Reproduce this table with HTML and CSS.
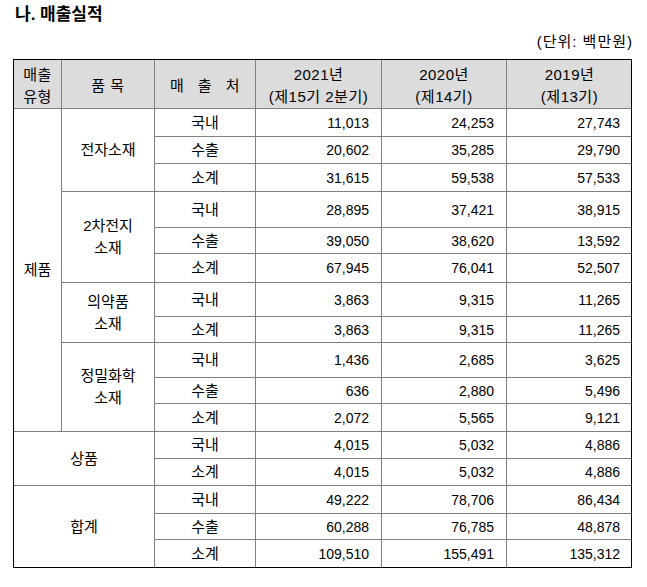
FILE: index.html
```html
<!DOCTYPE html>
<html lang="ko">
<head>
<meta charset="utf-8">
<title>매출실적</title>
<link rel="stylesheet" href="styles.css">
</head>
<body>
<div class="top">
  <div class="title">나. 매출실적</div>
  <div class="unit">(단위: 백만원)</div>
</div>
<div class="frame">
<table class="sales">
  <colgroup>
    <col class="c1"><col class="c2"><col class="c3"><col class="c4"><col class="c5"><col class="c6">
  </colgroup>
  <thead>
    <tr class="h49">
      <th>매출<br>유형</th>
      <th>품 목</th>
      <th class="spaced">매 출 처</th>
      <th>2021년<br>(제15기 2분기)</th>
      <th>2020년<br>(제14기)</th>
      <th>2019년<br>(제13기)</th>
    </tr>
  </thead>
  <tbody>
    <tr class="h28"><td rowspan="11">제품</td><td rowspan="3">전자소재</td><td>국내</td><td class="num">11,013</td><td class="num">24,253</td><td class="num">27,743</td></tr>
    <tr class="h27"><td>수출</td><td class="num">20,602</td><td class="num">35,285</td><td class="num">29,790</td></tr>
    <tr class="h28"><td>소계</td><td class="num">31,615</td><td class="num">59,538</td><td class="num">57,533</td></tr>
    <tr class="h36"><td rowspan="3">2차전지<br>소재</td><td>국내</td><td class="num">28,895</td><td class="num">37,421</td><td class="num">38,915</td></tr>
    <tr class="h26"><td>수출</td><td class="num">39,050</td><td class="num">38,620</td><td class="num">13,592</td></tr>
    <tr class="h29"><td>소계</td><td class="num">67,945</td><td class="num">76,041</td><td class="num">52,507</td></tr>
    <tr class="h34"><td rowspan="2">의약품<br>소재</td><td>국내</td><td class="num">3,863</td><td class="num">9,315</td><td class="num">11,265</td></tr>
    <tr class="h26"><td>소계</td><td class="num">3,863</td><td class="num">9,315</td><td class="num">11,265</td></tr>
    <tr class="h35"><td rowspan="3">정밀화학<br>소재</td><td>국내</td><td class="num">1,436</td><td class="num">2,685</td><td class="num">3,625</td></tr>
    <tr class="h26"><td>수출</td><td class="num">636</td><td class="num">2,880</td><td class="num">5,496</td></tr>
    <tr class="h28"><td>소계</td><td class="num">2,072</td><td class="num">5,565</td><td class="num">9,121</td></tr>
    <tr class="h27"><td colspan="2" rowspan="2">상품</td><td>국내</td><td class="num">4,015</td><td class="num">5,032</td><td class="num">4,886</td></tr>
    <tr class="h27"><td>소계</td><td class="num">4,015</td><td class="num">5,032</td><td class="num">4,886</td></tr>
    <tr class="h28"><td colspan="2" rowspan="3">합계</td><td>국내</td><td class="num">49,222</td><td class="num">78,706</td><td class="num">86,434</td></tr>
    <tr class="h26"><td>수출</td><td class="num">60,288</td><td class="num">76,785</td><td class="num">48,878</td></tr>
    <tr class="h28"><td>소계</td><td class="num">109,510</td><td class="num">155,491</td><td class="num">135,312</td></tr>
  </tbody>
</table>
</div>
</body>
</html>
```
FILE: styles.css
```css
html, body {
  margin: 0;
  padding: 0;
  background: #fff;
}
body {
  font-family: "Liberation Sans", "Noto Sans CJK KR", sans-serif;
  font-size: 14px;
  color: #000;
}
.top {
  height: 59px;
  box-sizing: border-box;
  padding: 0 14px 0 15px;
  display: flex;
  flex-direction: column;
}
.title {
  margin-top: 5px;
  font-size: 17px;
  font-weight: bold;
  line-height: 20px;
}
.unit {
  align-self: flex-end;
  margin-top: 8px;
  font-size: 15px;
  letter-spacing: 1px;
  line-height: 17px;
}
.frame {
  margin-left: 13px;
  width: 617px;
  border: 1px solid #000;
  overflow: hidden;
}
.sales {
  margin: -1px;
  width: 619px;
  border-collapse: collapse;
  table-layout: fixed;
}
.c1 { width: 48px; }
.c2 { width: 93px; }
.c3 { width: 101px; }
.c4 { width: 126px; }
.c5 { width: 125px; }
.c6 { width: 126px; }
.sales th,
.sales td {
  border: 1px solid #808080;
  padding: 0;
  text-align: center;
  vertical-align: middle;
  font-weight: normal;
  line-height: 22px;
  font-size: 15px;
}
.sales th {
  background: #dcdcdc;
  padding-top: 3px;
  letter-spacing: 0.5px;
}
.sales th.spaced {
  word-spacing: 9px;
}
.sales td.num {
  text-align: right;
  padding-right: 12px;
  font-size: 14px;
}
.h26 { height: 26px; }
.h27 { height: 27px; }
.h28 { height: 28px; }
.h29 { height: 29px; }
.h34 { height: 34px; }
.h35 { height: 35px; }
.h36 { height: 36px; }
.h49 { height: 49px; }
```
